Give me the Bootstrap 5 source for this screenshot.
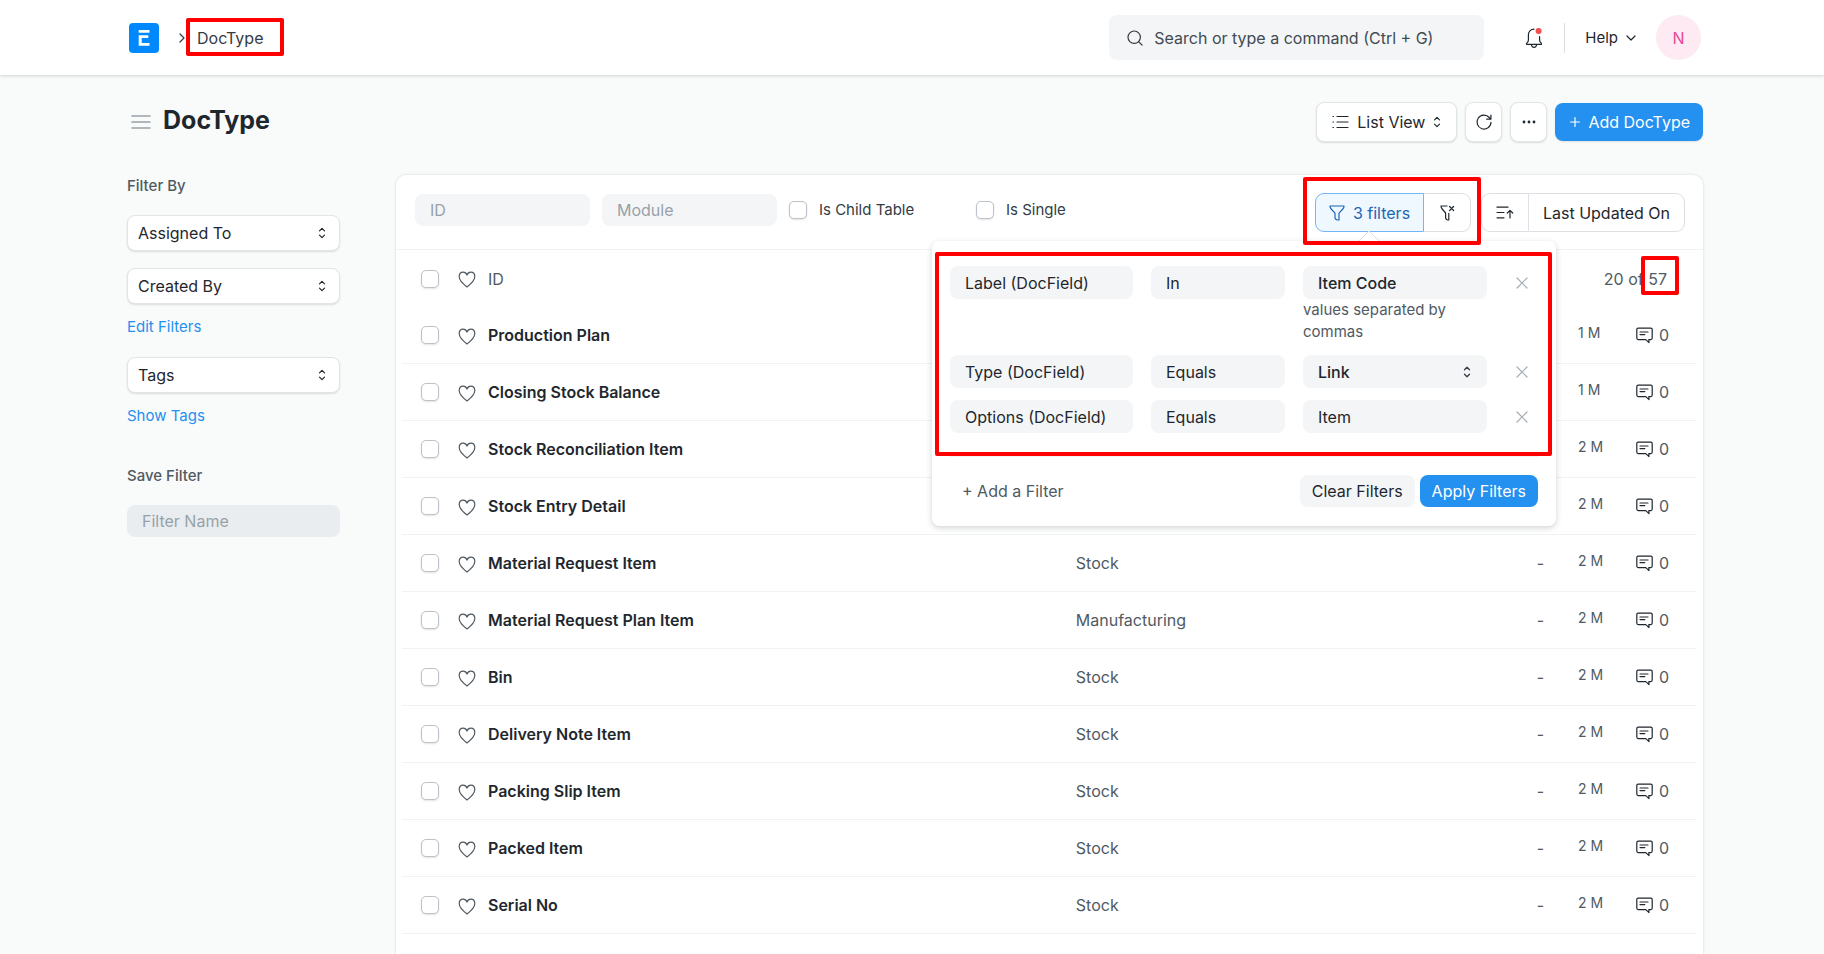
<!DOCTYPE html>
<html lang="en">
<head>
<meta charset="utf-8">
<meta name="viewport" content="width=device-width, initial-scale=1">
<title>DocType</title>
<link href="https://cdn.jsdelivr.net/npm/bootstrap@5.3.0/dist/css/bootstrap.min.css" rel="stylesheet">
<style>
:root{--ink:#1f272e;--body-ink:#333c44;--muted-ink:#505a62;--field:#f4f5f6;--line:#f0f2f4;--blue:#2490ef}
body{font-family:Inter,"Liberation Sans",sans-serif;font-size:16px;line-height:22px;color:var(--body-ink);background:#f9fafa;min-height:100vh}
svg{display:block;flex:none;fill:none;stroke:currentColor;stroke-width:1.2;stroke-linecap:round;stroke-linejoin:round}
button{color:var(--ink)}
.gutter{padding-left:127px;padding-right:121px}
.topbar{height:75px;background:#fff;box-shadow:0 1px 3px rgba(0,0,0,.16);padding-right:123px}
.brand{margin:0 20px 0 2px}
.crumb{margin-left:12px}
.crumb,.crumb:hover{color:var(--body-ink);text-decoration:none}
.marked{position:relative}
.marker{position:absolute;border:4px solid #f00;border-radius:2px;pointer-events:none}
.crumb .marker{inset:-9px -21px -7px -11px}
.search-box{width:375px;height:45px;background:var(--field);border-radius:8px;padding:0 18px;gap:11px}
.search-box input{border:0;background:none;outline:0;padding:0;min-width:0;color:var(--body-ink)}
.search-box input::placeholder{color:#414b53;opacity:1}
.plain{border:0;background:none;padding:0}
.rule-v{width:1px;height:30px;background:#dcdfe2}
.help{font-size:15px}
.avatar{width:45px;height:45px;border-radius:50%;background:#fdeaf3;color:#e8499a}
.page-title{font-size:25px;line-height:30px;font-weight:700;color:var(--ink)}
.page-head{padding-top:27px;padding-bottom:33px}
.tool{height:40px;background:#fff;border:1px solid #e2e5e7;border-radius:8px;box-shadow:0 1px 2px rgba(0,0,0,.12)}
.tool-square{width:37px}
.view-pick{width:141px;padding:0 15px}
.tool-primary{height:38px;background:var(--blue);color:#fff;border:0;border-radius:8px;padding:0 13px 0 15px;box-shadow:0 1px 2px rgba(0,0,0,.1)}
.side{width:213px;flex:none;margin-right:56px}
.side-label{font-size:15px;font-weight:500;color:var(--muted-ink)}
.side-gap{margin-bottom:18px}
.side-group{margin-top:38px}
.pick{height:36px;width:100%;background:#fff;border:1px solid #e2e5e7;border-radius:8px;box-shadow:0 1px 2px rgba(0,0,0,.12);padding:0 13px 0 10px}
.pick+.pick{margin-top:17px}
.side a{font-size:15px;color:var(--blue);text-decoration:none;display:block;margin:12px 0 19px}
.soft{background-color:var(--field);border:0;border-radius:8px;height:32px;padding:0 15px;color:var(--ink);outline:0;min-width:0}
.soft::placeholder{color:#98a1a9;opacity:1}
select.soft{appearance:none}
select.with-arrow{background-image:url("data:image/svg+xml,%3Csvg xmlns='http://www.w3.org/2000/svg' width='8' height='12' fill='none' stroke='%23333c44' stroke-width='1.3' stroke-linecap='round' stroke-linejoin='round'%3E%3Cpath d='M1.5 3.8 4 1.3l2.5 2.5M1.5 8.2 4 10.7l2.5-2.5'/%3E%3C/svg%3E");background-repeat:no-repeat;background-position:right 16px center}
.side .soft{background:#e9edf0}
.panel{background:#fff;border-radius:10px 10px 0 0;box-shadow:0 0 3px rgba(0,0,0,.15);min-width:0}
.toolbar{padding:18px 18px 17px 19px;border-bottom:1px solid var(--line)}
.quick{height:34px;gap:12px}
.quick>*{width:175px;font-size:15px}
.quick .soft{font-size:16px}
.tick{appearance:none;width:18px;height:18px;margin:0;display:block;flex:none;background:#fff;border:1px solid #bcc2c9;border-radius:5px;box-shadow:0 1px 2px rgba(0,0,0,.12)}
.seg-row{gap:10px}
.seg{height:39px;background:#fff;border:1px solid #dcdfe3}
.seg-l{border-radius:9px 0 0 9px}
.seg-r{border-radius:0 9px 9px 0;border-left:0}
.seg-icon{width:47px}
.seg-wide{width:157px}
.seg-on{background:#eff7ff;border-color:#74b6f5;color:#1b66b5;width:109px}
.filters>.marker{inset:-16px -10px -13px -12px;z-index:6}
.pop{position:absolute;top:48px;right:-85px;width:624px;background:#fff;border-radius:8px;box-shadow:0 2px 6px rgba(25,39,52,.2);z-index:5;padding:25px 18px 19px}
.pop-arrow{position:absolute;top:-11px;left:426px;stroke:#dcdfe3;stroke-width:1}
.pop>.marker{inset:11px 4px 70px 3px}
.pop .soft{height:33px;width:100%;display:block}
.pop .strong{font-weight:500}
.cond{display:grid;grid-template-columns:183px 134px 184px 1fr;column-gap:18px;align-items:start;margin-bottom:12px}
.cond .x{height:33px;justify-self:center;color:#a6adb4}
.hint{font-size:15px;line-height:22px;color:var(--muted-ink)}
.pop-foot{border-top:1px solid var(--line);margin-top:23px;padding-top:18px;gap:5px}
.pop-foot button{height:32px;border-radius:8px;border:0;padding:0 12px}
.pop-foot .add{color:var(--muted-ink)}
.pop-foot .clear{background:var(--field)}
.pop-foot .apply{background:var(--blue);color:#fff}
.records{padding:0 7px 0 6px}
.records table{width:100%;table-layout:fixed;border-collapse:separate;border-spacing:0}
.records th,.records td{height:57px;padding:0;vertical-align:middle;font-weight:400;color:var(--muted-ink)}
.records td{border-bottom:1px solid var(--line)}
.records a{color:var(--ink);font-weight:600;text-decoration:none}
.records .tick{margin-left:19px}
.c-tick{width:46px}.c-like{width:40px}.c-mod{width:30%}.c-flag{width:80px}.c-time{width:92px}.c-com{width:60px}
.records .when{font-size:14px;padding:0 0 4px 34px}
.records .total{padding-right:29px}
.total .marker{inset:-13px -12px -6px -7px}
.like{margin:2px 0 0 10px}
.chat{gap:6px;color:var(--muted-ink)}
.chat svg{color:var(--ink);margin-top:1px}
</style>
</head>
<body class="d-flex flex-column">
<svg width="0" height="0" class="position-absolute" aria-hidden="true">
  <symbol id="i-updown" viewBox="0 0 8 12"><path d="M1.5 3.8 4 1.3l2.5 2.5M1.5 8.2 4 10.7l2.5-2.5"/></symbol>
  <symbol id="i-heart" viewBox="0 0 18 17"><path d="M9 16C5.800 13.600 1.200 9.900 1.200 5.600 1.200 2.900 3 1.200 5.200 1.200c1.900 0 3.200 1.200 3.800 2.900.6-1.700 1.900-2.900 3.800-2.900 2.200 0 4 1.700 4 4.400C16.800 9.900 12.200 13.600 9 16z"/></symbol>
  <symbol id="i-chat" viewBox="0 0 17 17"><path d="M2.200 1.200h12.600q1.400 0 1.400 1.400v8.500q0 1.500-1.400 1.500h-2l.2 3-3.200-3H2.200q-1.400 0-1.400-1.500V2.600q0-1.400 1.400-1.400zM4 5h8M4 7.600h4.800"/></symbol>
  <symbol id="i-x" viewBox="0 0 12 12"><path d="m1 1 10 10M11 1 1 11"/></symbol>
</svg>

<header class="topbar gutter d-flex align-items-center flex-shrink-0">
  <a href="#" class="brand" aria-label="Home"><svg width="30" height="30" viewBox="0 0 30 30" style="stroke:none"><rect width="30" height="30" rx="4" fill="#0089ff"/><path fill="#fff" d="M9.700 7h10.800v2.800H9.700zM9.700 12.300h9.600v2.700h-6.600v5h7.800v2.700H9.700z"/></svg></a>
  <svg width="6" height="12" viewBox="0 0 6 12"><path d="m1 2 4 4-4 4"/></svg>
  <a href="#" class="crumb marked">DocType<span class="marker"></span></a>
  <label class="search-box d-flex align-items-center ms-auto">
    <svg width="16" height="16" viewBox="0 0 16 16"><circle cx="7.200" cy="7.200" r="6.200"/><path d="m11.800 11.800 3.200 3.200"/></svg>
    <input type="text" class="flex-grow-1" placeholder="Search or type a command (Ctrl + G)" aria-label="Search">
  </label>
  <button class="plain ms-4 px-3" aria-label="Notifications"><svg width="20" height="22" viewBox="0 0 20 22"><path d="M10 2.200c-3.400 0-5.600 2.500-5.600 5.600v5.100c0 1.300-.5 2.200-1.600 3.200-.6.600-.4 1.300.4 1.300h13.600c.8 0 1-.7.4-1.300-1.100-1-1.600-1.900-1.600-3.200V9.500M7.400 17.800c.2 1.800 1.300 2.600 2.600 2.600s2.400-.8 2.600-2.600"/><circle cx="14.600" cy="4" r="3" fill="#f0514f" stroke="none"/></svg></button>
  <span class="rule-v ms-1"></span>
  <button class="plain help d-flex align-items-center gap-2 ms-3 px-1">Help <svg width="10" height="8" viewBox="0 0 10 8"><path d="m1 2 4 4 4-4"/></svg></button>
  <button class="plain avatar ms-3">N</button>
</header>

<div class="page-head gutter d-flex align-items-center">
  <button class="plain ms-1 me-2 pe-1" aria-label="Toggle sidebar"><svg width="20" height="18" viewBox="0 0 20 18" style="stroke:#98a1a9;stroke-width:1.600"><path d="M1 3h18M1 9h18M1 15h18"/></svg></button>
  <h1 class="page-title mb-1">DocType</h1>
  <div class="d-flex align-items-center gap-2 ms-auto">
    <button class="tool view-pick d-flex align-items-center justify-content-between"><svg width="17" height="14" viewBox="0 0 17 14"><path d="M5 1.500h11M5 7h11M5 12.500h11M1 1.500h.5M1 7h.5M1 12.500h.5"/></svg><span>List View</span><svg width="8" height="12"><use href="#i-updown"/></svg></button>
    <button class="tool tool-square d-flex align-items-center justify-content-center" aria-label="Refresh"><svg width="18" height="18" viewBox="0 0 18 18"><path d="M16 9.300A7 7 0 1 1 14.300 4.500L15.500 6M15.900 2v4.200h-4.200"/></svg></button>
    <button class="tool tool-square d-flex align-items-center justify-content-center" aria-label="More"><svg width="14" height="4" viewBox="0 0 14 4" style="fill:currentColor;stroke:none"><circle cx="2" cy="2" r="1.400"/><circle cx="7" cy="2" r="1.400"/><circle cx="12" cy="2" r="1.400"/></svg></button>
    <button class="tool-primary d-flex align-items-center gap-2"><svg width="10" height="10" viewBox="0 0 10 10"><path d="M5 .6v8.800M.6 5h8.800"/></svg>Add DocType</button>
  </div>
</div>

<main class="gutter d-flex flex-grow-1">
  <aside class="side">
    <div class="side-label side-gap">Filter By</div>
    <button class="pick d-flex align-items-center justify-content-between">Assigned To<svg width="8" height="12"><use href="#i-updown"/></svg></button>
    <button class="pick d-flex align-items-center justify-content-between">Created By<svg width="8" height="12"><use href="#i-updown"/></svg></button>
    <a href="#">Edit Filters</a>
    <button class="pick d-flex align-items-center justify-content-between">Tags<svg width="8" height="12"><use href="#i-updown"/></svg></button>
    <a href="#">Show Tags</a>
    <label for="fname" class="side-label side-group side-gap d-block">Save Filter</label>
    <input id="fname" class="soft w-100" type="text" placeholder="Filter Name">
  </aside>

  <section class="panel flex-grow-1">
    <div class="toolbar d-flex align-items-start justify-content-between">
      <div class="quick d-flex align-items-center">
        <input class="soft" type="text" placeholder="ID" aria-label="ID">
        <input class="soft" type="text" placeholder="Module" aria-label="Module">
        <label class="d-flex align-items-center gap-2"><input type="checkbox" class="tick me-1">Is Child Table</label>
        <label class="d-flex align-items-center gap-2"><input type="checkbox" class="tick me-1">Is Single</label>
      </div>
      <div class="seg-row d-flex">
        <div class="filters marked d-flex">
          <button class="seg seg-l seg-on d-flex align-items-center justify-content-center gap-2"><svg width="16" height="16" viewBox="0 0 16 16"><path d="M1 1h14q.3 1.500-1.200 3L10 8.200V15H8.200Q6.500 14.500 6 13V8.200L2.200 4Q.8 2.500 1 1z"/></svg>3 filters</button>
          <button class="seg seg-r seg-icon d-flex align-items-center justify-content-center" aria-label="Clear all filters"><svg width="15" height="16" viewBox="0 0 15 16"><path d="M7 1H1q0 1.600 1.200 3L5.600 8v5q.5 1.600 1.800 2h1.400V8.300M9.600 1.500l4 4M13.600 1.500l-4 4"/></svg></button>
          <div class="pop">
            <svg class="pop-arrow" width="22" height="12" viewBox="0 0 22 12"><path fill="#fff" stroke="none" d="M1 12 11 1l10 11z"/><path d="m1 11 10-10 10 10"/></svg>
            <div class="cond">
              <input class="soft" value="Label (DocField)" aria-label="Field">
              <select class="soft" aria-label="Condition"><option>In</option></select>
              <div><input class="soft strong" value="Item Code" aria-label="Value"><div class="hint">values separated by commas</div></div>
              <button class="plain x" aria-label="Remove"><svg width="12" height="12"><use href="#i-x"/></svg></button>
            </div>
            <div class="cond">
              <input class="soft" value="Type (DocField)" aria-label="Field">
              <select class="soft" aria-label="Condition"><option>Equals</option></select>
              <select class="soft strong with-arrow" aria-label="Value"><option>Link</option></select>
              <button class="plain x" aria-label="Remove"><svg width="12" height="12"><use href="#i-x"/></svg></button>
            </div>
            <div class="cond">
              <input class="soft" value="Options (DocField)" aria-label="Field">
              <select class="soft" aria-label="Condition"><option>Equals</option></select>
              <input class="soft" value="Item" aria-label="Value">
              <button class="plain x" aria-label="Remove"><svg width="12" height="12"><use href="#i-x"/></svg></button>
            </div>
            <div class="pop-foot d-flex align-items-center">
              <button class="plain add me-auto">+ Add a Filter</button>
              <button class="clear">Clear Filters</button>
              <button class="apply">Apply Filters</button>
            </div>
            <span class="marker"></span>
          </div>
          <span class="marker"></span>
        </div>
        <div class="d-flex">
          <button class="seg seg-l seg-icon d-flex align-items-center justify-content-center border-end-0" aria-label="Sort direction"><svg width="18" height="14" viewBox="0 0 18 14"><path d="M1 1.200h11M1 6.500h7M1 11.800h7M14 12V4.500M11.300 7 14 4.300 16.700 7"/></svg></button>
          <button class="seg seg-r seg-wide border-start">Last Updated On</button>
        </div>
      </div>
    </div>
    <div class="records">
      <table>
        <colgroup><col class="c-tick"><col class="c-like"><col><col class="c-mod"><col class="c-flag"><col class="c-time"><col class="c-com"></colgroup>
        <thead><tr>
          <th><input type="checkbox" class="tick" aria-label="Select all"></th>
          <th><svg class="like" width="18" height="17"><use href="#i-heart"/></svg></th>
          <th>ID</th><th></th><th></th>
          <th colspan="2" class="total text-end">20 of <span class="marked">57<span class="marker"></span></span></th>
        </tr></thead>
        <tbody id="rows"></tbody>
      </table>
    </div>
  </section>
</main>
<script>
const docs = [
  ["Production Plan", "", "", "1 M"],
  ["Closing Stock Balance", "", "", "1 M"],
  ["Stock Reconciliation Item", "", "", "2 M"],
  ["Stock Entry Detail", "", "", "2 M"],
  ["Material Request Item", "Stock", "-", "2 M"],
  ["Material Request Plan Item", "Manufacturing", "-", "2 M"],
  ["Bin", "Stock", "-", "2 M"],
  ["Delivery Note Item", "Stock", "-", "2 M"],
  ["Packing Slip Item", "Stock", "-", "2 M"],
  ["Packed Item", "Stock", "-", "2 M"],
  ["Serial No", "Stock", "-", "2 M"]
];
document.getElementById("rows").innerHTML = docs.map(([name, mod, flag, age]) => `<tr>
  <td><input type="checkbox" class="tick" aria-label="Select ${name}"></td>
  <td><svg class="like" width="18" height="17"><use href="#i-heart"/></svg></td>
  <td><a href="#">${name}</a></td><td>${mod}</td><td class="text-end">${flag}</td>
  <td class="when">${age}</td>
  <td><span class="chat d-flex align-items-center"><svg width="17" height="17"><use href="#i-chat"/></svg>0</span></td></tr>`).join("");
</script>
<script src="https://cdn.jsdelivr.net/npm/bootstrap@5.3.0/dist/js/bootstrap.bundle.min.js"></script>
</body>
</html>
